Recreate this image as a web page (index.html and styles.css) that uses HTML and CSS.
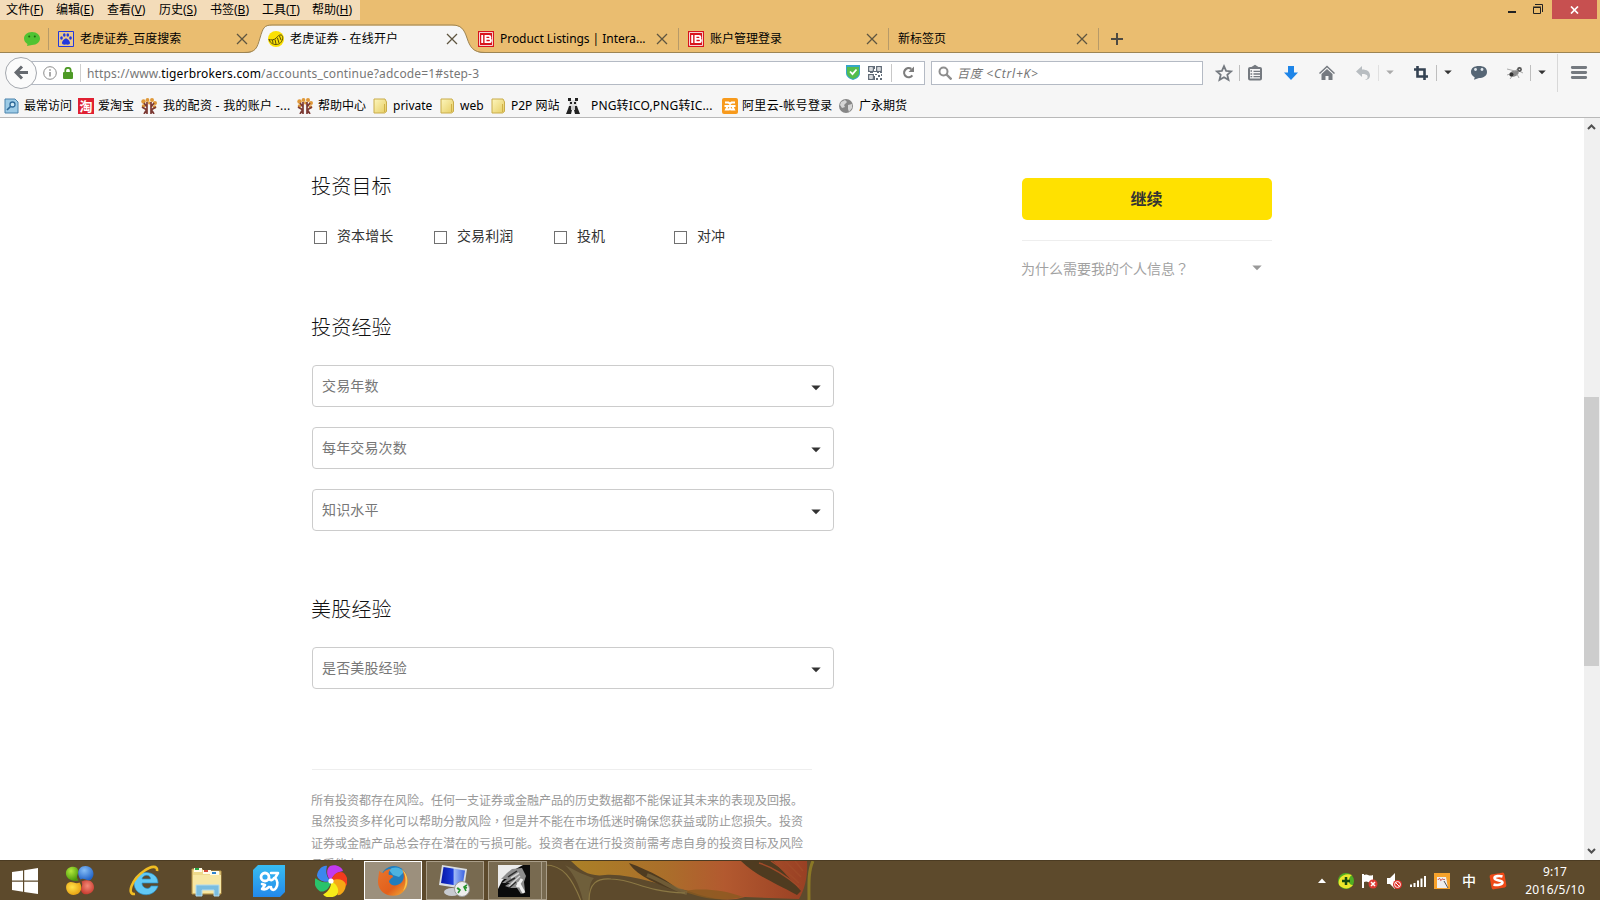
FILE: index.html
```html
<!DOCTYPE html>
<html lang="zh-CN">
<head>
<meta charset="utf-8">
<title>老虎证券 - 在线开户</title>
<link rel="stylesheet" href="styles.css">
</head>
<body>
<svg class="defs" width="0" height="0">
  <defs>
    <linearGradient id="folder" x1="0" y1="0" x2="1" y2="1"><stop offset="0" stop-color="#fdf6bd"/><stop offset="1" stop-color="#e6cd62"/></linearGradient>
    <linearGradient id="sky" x1="0" y1="0" x2="0" y2="1"><stop offset="0" stop-color="#38bdf2"/><stop offset="1" stop-color="#2389ea"/></linearGradient>
    <linearGradient id="fox" x1="0" y1="0" x2="1" y2="1"><stop offset="0" stop-color="#e8742c"/><stop offset=".6" stop-color="#e2601c"/><stop offset="1" stop-color="#f3b63a"/></linearGradient>
    <linearGradient id="screen" x1="0" y1="0" x2="1" y2="0"><stop offset="0" stop-color="#0616a8"/><stop offset=".5" stop-color="#1c3ddb"/><stop offset=".55" stop-color="#9fb9f5"/><stop offset="1" stop-color="#3a62e2"/></linearGradient>
    <linearGradient id="leaf" x1="0" y1="0" x2="1" y2="0"><stop offset="0" stop-color="#b98a26"/><stop offset=".4" stop-color="#b8752a"/><stop offset=".65" stop-color="#c25c30"/><stop offset="1" stop-color="#a33e22"/></linearGradient>
    <radialGradient id="greenball" cx=".4" cy=".3" r=".7"><stop offset="0" stop-color="#b4ea3c"/><stop offset="1" stop-color="#4c9a0c"/></radialGradient>
    <radialGradient id="blueball" cx=".4" cy=".3" r=".7"><stop offset="0" stop-color="#85bdf6"/><stop offset="1" stop-color="#2264c8"/></radialGradient>
    <radialGradient id="goldball" cx=".4" cy=".4" r=".7"><stop offset="0" stop-color="#ffe14a"/><stop offset="1" stop-color="#e69a0a"/></radialGradient>
    <radialGradient id="redball" cx=".5" cy=".4" r=".7"><stop offset="0" stop-color="#f58a78"/><stop offset="1" stop-color="#c22f24"/></radialGradient>
    <symbol id="x" viewBox="0 0 12 12"><path d="M1 1l10 10M11 1L1 11" stroke="#5e5540" stroke-width="1.3"/></symbol>
    <symbol id="ib" viewBox="0 0 16 16"><path d="M0 0h16v16H0z" fill="#d8141c"/><path d="M1.5 1.5h13v13h-13z" fill="none" stroke="#fff" stroke-opacity=".8"/><path d="M4.200 4v8M7.500 4.900h3.400a1.500 1.500 0 0 1 0 3H7.500zM7.500 7.900h3.800a1.600 1.600 0 0 1 0 3.200H7.500z" fill="none" stroke="#fff" stroke-width="1.900"/></symbol>
    <symbol id="dir" viewBox="0 0 16 16"><path d="M1 1h11l1.500 3v9.500l-2 1.500H1z" fill="url(#folder)" stroke="#c9ac4a"/><path d="M11.500 6v8" stroke="#d0b148"/></symbol>
    <symbol id="tree" viewBox="0 0 16 16"><g fill="#df9838"><circle cx="2.500" cy="3.500" r="2.200"/><circle cx="6.500" cy="2" r="1.900"/><circle cx="11" cy="2" r="2"/><circle cx="14" cy="5" r="2"/><circle cx="2.500" cy="8" r="1.800"/><circle cx="13.500" cy="9" r="1.800"/><circle cx="8.500" cy="5" r="1.500"/></g><path d="M6 16V9L3 5M6 9V4M10 16V9l3-4M10 9V4M1 9l5 3M15 9l-5 3M3 16l3-5M13 16l-3-5" stroke="#7c3a34" stroke-width="1.700" fill="none"/></symbol>
    <symbol id="caret" viewBox="0 0 10 6"><path d="M.3.500h9.400L5 5.200z"/></symbol>
  </defs>
</svg>

<header class="chrome">
  <div class="titlebar">
    <nav class="menus">
      <span>文件(<u>F</u>)</span><span>编辑(<u>E</u>)</span><span>查看(<u>V</u>)</span><span>历史(<u>S</u>)</span><span>书签(<u>B</u>)</span><span>工具(<u>T</u>)</span><span>帮助(<u>H</u>)</span>
    </nav>
    <div class="controls">
      <svg width="46" height="19"><path d="M2 12h8" stroke="#222" stroke-width="2"/><path d="M27.500 7.500h7v6h-7zM27 7h8" fill="none" stroke="#222"/><path d="M29 4.500h7.500V12" fill="none" stroke="#222"/></svg>
      <div class="close"><svg width="9" height="8"><path d="M1 .5l7 7M8 .5l-7 7" stroke="#fff" stroke-width="1.700"/></svg></div>
    </div>
  </div>

  <div class="tabs">
    <div class="pinned"><svg width="16" height="14" viewBox="0 0 16 14"><path d="M8 0c5 0 8 3 8 6.500S13 13 8 13l-5 1 .5-2C1.500 11 0 9 0 6.500 0 3 3 0 8 0z" fill="#50c332"/><circle cx="5.200" cy="4.500" r="1" fill="#1c6a10"/><circle cx="10.800" cy="4.500" r="1" fill="#1c6a10"/></svg></div>
    <div class="tab split">
      <svg class="fav" viewBox="0 0 16 16"><path d="M.5.5h15v15H.5z" fill="#ebc68b" stroke="#2338dd"/><g fill="#2338dd"><ellipse cx="3.500" cy="7" rx="1.300" ry="1.700"/><ellipse cx="6.300" cy="4" rx="1.300" ry="1.800"/><ellipse cx="9.800" cy="4" rx="1.300" ry="1.800"/><ellipse cx="12.500" cy="7" rx="1.300" ry="1.700"/><path d="M8 7.500c1.700 0 4 2.700 4 4.500s-2.200 1.800-4 1.500c-1.800.3-4 .3-4-1.500s2.300-4.500 4-4.500z"/></g></svg>
      <span class="name">老虎证券_百度搜索</span><svg class="x"><use href="#x"/></svg>
    </div>
    <div class="tab active">
      <svg class="shape" width="242" height="30" viewBox="0 0 242 30"><path d="M0 29C12 29 13 24 16 14S20 1.500 28 1.500H208C217 1.500 220 5 223 14S229 29 241 29V30H0z" fill="#f6f6f6"/><path d="M0 28.500C12 28.500 13 24 16 14S20 1 28 1H208C217 1 220 5 223 14S229 28.500 241 28.500" fill="none" stroke="#9c8453"/></svg>
      <svg class="fav" viewBox="0 0 16 16"><circle cx="8" cy="8" r="8" fill="#fbe104"/><path d="M.8 8.500c2.500.8 5.500.5 7.500-1.500 1.500-2 3-3.500 5-3 2.500 1 1.500 6-1.500 8.500-3 1.800-7 1.300-9.500-1.500zM4.500 9l.5 3.500M7 8.500l1 4.500M9.500 7l1.500 5M11.500 5l1.500 4" fill="none" stroke="#5b4f08"/></svg>
      <span class="name opened">老虎证券 - 在线开户</span><svg class="x"><use href="#x"/></svg>
    </div>
    <div class="tab"><svg class="fav"><use href="#ib"/></svg><span class="name product">Product Listings | Intera...</span><svg class="x"><use href="#x"/></svg></div>
    <div class="tab split"><svg class="fav"><use href="#ib"/></svg><span class="name">账户管理登录</span><svg class="x"><use href="#x"/></svg></div>
    <div class="tab split"><span class="name">新标签页</span><svg class="x"><use href="#x"/></svg></div>
    <div class="tab-new split"><svg width="12" height="12"><path d="M6 0v12M0 6h12" stroke="#4d4a42" stroke-width="2"/></svg></div>
  </div>

  <div class="toolbar">
    <div class="address">
      <div class="back"><svg width="15" height="15" viewBox="0 0 15 15"><path d="M8 1.500L2 7.500l6 6M2.500 7.500H14" fill="none" stroke="#666a70" stroke-width="3"/></svg></div>
      <svg class="info" width="14" height="14"><circle cx="7" cy="7" r="6.300" fill="none" stroke="#8c8c8c"/><path d="M7 6v4.500M7 3.200v1.600" stroke="#8c8c8c" stroke-width="1.500"/></svg>
      <svg class="lock" width="10" height="12"><path d="M2.300 6V3.500a2.700 2.700 0 0 1 5.400 0V6" fill="none" stroke="#4e9a26" stroke-width="1.700"/><rect y="5" width="10" height="7" rx="1" fill="#4e9a26"/></svg>
      <span class="url">https://www.<b>tigerbrokers.com</b>/accounts_continue?adcode=1#step-3</span>
      <svg width="14" height="15" viewBox="0 0 14 15"><path d="M0 0h14v8c0 4-4 6-7 7-3-1-7-3-7-7z" fill="#36a6c8"/><path d="M1 2h12v6c0 3-3 5-6 6-3-1-6-3-6-6z" fill="#55bd4c"/><path d="M4 6.500l2.500 2.700L10.500 4.500" fill="none" stroke="#fff" stroke-width="1.800"/></svg>
      <svg class="qr" width="14" height="14"><path d="M.7.700h4.600v4.600H.7zM8.700.7h4.600v4.600H8.700zM.7 8.700h4.600v4.600H.7z" fill="none" stroke="#606a76" stroke-width="1.300"/><path d="M2.500 2.500h1v1h-1zM10.500 2.500h1v1h-1zM2.500 10.500h1v1h-1zM6 0h1v3H6zM6 5h2v1H6zM2 6h3v1H2zM9 6h2v1H9zM12 6h2v1h-2zM7 8h2v1H7zM10 9h2v2h-2zM12 12h2v2h-2zM8 12h2v2H8zM6 10h1v4H6zM13 8h1v2h-1z" fill="#606a76"/></svg>
      <div class="reload"><svg width="13" height="13" viewBox="0 0 13 13"><path d="M10.300 9.300A4.500 4.500 0 1 1 9.300 3" fill="none" stroke="#7d7d7d" stroke-width="2.200"/><path d="M12 .5V6H6.500z" fill="#7d7d7d"/></svg></div>
    </div>
    <div class="search"><svg width="14" height="14"><circle cx="5.500" cy="5.500" r="4" fill="none" stroke="#8e8e8e" stroke-width="2"/><path d="M8.500 8.500l5 5" stroke="#8e8e8e" stroke-width="2.400"/></svg><i>百度 &lt;Ctrl+K&gt;</i></div>
    <div class="tools">
      <svg class="tool" viewBox="0 0 20 20"><path d="M10 3.200l2.100 4.700 5 .5-3.800 3.400 1.200 5L10 14.200l-4.500 2.600 1.200-5L2.900 8.400l5-.5z" fill="none" stroke="#757a80" stroke-width="1.800"/></svg>
      <i class="sep"></i>
      <svg class="tool" viewBox="0 0 20 20"><rect x="4" y="5" width="12" height="11.500" rx="1" fill="none" stroke="#757a80" stroke-width="2"/><path d="M6 5l4-2.500L14 5zM5.500 8h1.500M8.500 8.300h6.500M8.500 11h6.500M8.500 13.700h6.500M5.500 11h1.700M5.500 13.700h1.700" fill="#757a80" stroke="#757a80" stroke-width="1.300"/></svg>
      <svg class="tool" viewBox="0 0 20 20"><path d="M7 3h6v6.500h4L10 17 3 9.500h4z" fill="#1e85e8"/></svg>
      <svg class="tool" viewBox="0 0 20 20"><path d="M2.500 10.500L10 3.500l7.500 7" fill="none" stroke="#757a80" stroke-width="1.500"/><path d="M10 6l5.500 5v6h-4v-4h-3v4h-4v-6z" fill="#757a80"/></svg>
      <svg class="tool" viewBox="0 0 20 20"><path d="M9 3v3.500c5 0 8 2 8 6 0 3-2.500 4.500-5 4.500 2-1 3-2 2.500-4-.5-1.500-2.500-2-5.500-2V14L3 8.500z" fill="#b8bdc1"/></svg>
      <i class="sep pale"></i><svg class="caret light"><use href="#caret"/></svg>
      <svg class="tool" viewBox="0 0 20 20"><path d="M6.500 3v10.500H17M3 6.500h10.500V17" fill="none" stroke="#344252" stroke-width="2.600"/></svg>
      <i class="sep"></i><svg class="caret"><use href="#caret"/></svg>
      <svg class="tool" viewBox="0 0 20 20"><path d="M10 3c5 0 8 2 8 6s-4 6-8 6l-5 1.700.7-2.500C3.500 13 2 11.500 2 9c0-4 3-6 8-6z" fill="#566675"/><circle cx="6.500" cy="6.500" r="1.400" fill="#e4eaf0"/><circle cx="13" cy="6.500" r="1.400" fill="#e4eaf0"/></svg>
      <svg class="tool" viewBox="0 0 20 20"><ellipse cx="9" cy="10.500" rx="5" ry="3" fill="#888" transform="rotate(-22 9 10.500)"/><path d="M2 6l8 2 5-4M5 11l-3 1M8 12l-3 4M12 11l2 4M14 8l4 2" stroke="#aaa" fill="none"/><circle cx="6.500" cy="11.500" r="2" fill="#333"/><circle cx="14.500" cy="6.500" r="2.400" fill="#555"/><circle cx="14.500" cy="6.500" r=".8" fill="#ddd"/></svg>
      <i class="sep"></i><svg class="caret"><use href="#caret"/></svg>
      <i class="sep tall"></i>
      <svg class="tool burger" viewBox="0 0 20 20"><path d="M3.300 4.500h13.400M3.300 9.500h13.400M3.300 14.500h13.400" stroke="#757a80" stroke-width="2.900" stroke-linecap="round"/></svg>
    </div>
  </div>

  <div class="bookmarks">
    <span><svg viewBox="0 0 16 16"><path d="M1 1h10l3 3v11H1z" fill="#9dcbe6" stroke="#4b83ac"/><circle cx="8.500" cy="6.500" r="2.500" fill="#cfe9f6" stroke="#2f6a9a" stroke-width="1.300"/><path d="M6.500 8.500L3 12" stroke="#2f6a9a" stroke-width="1.700"/></svg>最常访问</span>
    <span><em class="tao">淘</em>爱淘宝</span>
    <span><svg><use href="#tree"/></svg><q class="fund">我的配资 - 我的账户 -...</q></span>
    <span><svg><use href="#tree"/></svg><q class="help">帮助中心</q></span>
    <span><svg><use href="#dir"/></svg>private</span>
    <span><svg><use href="#dir"/></svg>web</span>
    <span><svg><use href="#dir"/></svg>P2P 网站</span>
    <span class="panda"><svg viewBox="0 0 16 16"><path d="M4 2h8v6H4z" fill="#ddd"/><path d="M3 0h3v3H3zM10 0h3v3h-3zM5 4h2v2H5zM9 4h2v2H9zM4 8h8l1 3 2 5h-5l-1-4H7l-1 4H1l2-5z" fill="#222"/><path d="M6 8h4v4H6z" fill="#ccc"/></svg><q class="png">PNG转ICO,PNG转IC...</q></span>
    <span><svg viewBox="0 0 16 16"><rect width="16" height="16" rx="2" fill="#f79a1c"/><path d="M3 4.500h3.500l1.500 1.500L9.500 4.500H13M2.500 8h11M5.500 8.500L4 11.500h3l1-1.500 1 1.500h3l-1.500-3" fill="none" stroke="#fff" stroke-width="1.900"/></svg><q class="ali">阿里云-帐号登录</q></span>
    <span class="globe"><svg viewBox="0 0 16 16"><circle cx="8" cy="8" r="7" fill="#868686"/><path d="M3 4l4-2 2 2-3 3 1 2-3 1-2-3zM10 7l4-1v4l-3 4-1-3z" fill="#d5d5d5"/></svg>广永期货</span>
  </div>
</header>

<main class="viewport">
  <div class="page">
    <section class="form">
      <h2>投资目标</h2>
      <div class="checks"><label><i></i>资本增长</label><label><i></i>交易利润</label><label><i></i>投机</label><label><i></i>对冲</label></div>
      <h2>投资经验</h2>
      <div class="selects">
        <div class="select">交易年数<svg class="caret"><use href="#caret"/></svg></div>
        <div class="select">每年交易次数<svg class="caret"><use href="#caret"/></svg></div>
        <div class="select">知识水平<svg class="caret"><use href="#caret"/></svg></div>
      </div>
      <h2>美股经验</h2>
      <div class="select">是否美股经验<svg class="caret"><use href="#caret"/></svg></div>
      <p class="risk"><span>所有投资都存在风险。任何一支证券或金融产品的历史数据都不能保证其未来的表现及回报。<br>虽然投资多样化可以帮助分散风险<span class="centred" lang="zh-TW">，</span>但是并不能在市场低迷时确保您获益或防止您损失。投资<br>证券或金融产品总会存在潜在的亏损可能。投资者在进行投资前需考虑自身的投资目标及风险<br>承受能力</span></p>
    </section>
    <aside class="side">
      <button>继续</button>
      <div class="why"><span>为什么需要我的个人信息<span class="centred" lang="zh-TW">？</span></span><svg class="caret"><use href="#caret"/></svg></div>
    </aside>
  </div>
  <div class="scroll">
    <svg width="9" height="6"><path d="M1 5l3.500-3.500L8 5" fill="none" stroke="#505050" stroke-width="2"/></svg>
    <div class="thumb"></div>
    <svg width="9" height="6"><path d="M1 1l3.500 3.500L8 1" fill="none" stroke="#505050" stroke-width="2"/></svg>
  </div>
</main>

<footer class="taskbar">
  <svg class="wallpaper" width="300" height="40" viewBox="0 0 300 40">
    <path d="M26 0H262C263 14 260 28 254 38L200 36C180 42 160 36 140 29 120 26 85 12 60 14 45 16 36 10 26 0z" fill="url(#leaf)" opacity=".85"/>
    <path d="M84 2c6 10 22 20 54 30-14-12-32-22-54-30zM196 0c14 14 30 20 56 34l4-4C240 12 234 6 228 0z" fill="#4f3b20"/>
    <path d="M214 2c14 4 26 12 40 24M226 0c12 8 20 14 28 22M240 0l16 16M250 0l8 10" fill="none" stroke="#a04a28" stroke-width="1.500"/>
    <path d="M138 30c16-3 40-2 60 6-20 5-40 2-60-6z" fill="#8a5a20" opacity=".8"/>
    <path d="M102 14c16 6 26 14 40 18" fill="none" stroke="#7d6a40" stroke-width="4" opacity=".7"/>
    <path d="M20 4c8 8 14 18 18 36h7c-2-14 1-20 4-23-8-2-16-6-29-13z" fill="#746440" opacity=".8"/>
    <path d="M0 4C18 4 27 17 36 40M44 40C44 22 52 17 66 18c26 1 30 12 74 14" fill="none" stroke="#8b7844" stroke-width="1.200"/>
    <path d="M268 0c-5 10-4 25-4 40" fill="none" stroke="#8a7826" stroke-width="3"/>
  </svg>
  <div class="launch">
    <div class="start"><svg width="26" height="26" viewBox="0 0 26 26"><path d="M0 4l11-1.600V12.500H0zM12.200 2.200L26 0v12.500H12.200zM0 13.700h11v10L0 22zM12.200 13.700H26V26l-13.800-2z" fill="#fff"/></svg></div>
    <div class="app"><svg width="30" height="30" viewBox="0 0 30 30"><path d="M13.500 14.500C6 16 0 12 1 6S12-1 13 4s-3 6 .5 10.500z" fill="url(#greenball)"/><path d="M15.500 13.500c-4-5-3-13.500 5-13.500s10 9 6 13-7-2-11 .5z" fill="url(#blueball)"/><path d="M14.500 16.500c4 5 1 12.500-6 12.500S-1 20 3 17s7 2 11.500-.5z" fill="url(#goldball)"/><path d="M16.500 15.500c7-3 12.500 0 12.500 6s-9 9-12 5 2-6-.5-11z" fill="url(#redball)"/></svg></div>
    <div class="app ie"><svg width="32" height="32" viewBox="0 0 32 32"><path d="M29 18H13c0 6 8 7 9 3h7C25 34 5 32 5 18S29 4 29 18zM13 14h8.500c0-5-7.500-5-8.500 0z" fill="#62c9f5" stroke="#2a8fca" stroke-width=".7"/><path d="M6 29C-3 30 3 14 15 6c7-5 14-6 13 0" fill="none" stroke="#f1bd22" stroke-width="2.600"/></svg></div>
    <div class="app"><svg width="32" height="32" viewBox="0 0 32 32"><path d="M1 4h10l2 2h17v23H1z" fill="#eed98b" stroke="#b9964b"/><path d="M3 3h8v4H3zM12 5h8v4h-8zM19 6h9v4h-9z" fill="#fffbe9"/><path d="M4 3h4v2H4z" fill="#28a745"/><path d="M13 5h4v2h-4z" fill="#d24a37"/><path d="M21 7h4v2h-4z" fill="#2e84d0"/><path d="M2 10h28v18H2z" fill="#f7e7a4"/><path d="M5 31V20h23v11h-5v-6H11v6z" fill="#7abde0" stroke="#b4dbee"/></svg></div>
    <div class="app"><svg width="32" height="32" viewBox="0 0 32 32"><path d="M5 0h27v27l-5 5H0V5z" fill="url(#sky)"/><circle cx="12" cy="12" r="4" fill="none" stroke="#fff" stroke-width="2.800"/><path d="M16 14c2 2 4 1 5-1M18 8h7l-3 5c3 2 3 7 1 10s-5 2-5-1M9 19l3 1-3 4c3 1 5 0 7-2" fill="none" stroke="#fff" stroke-width="2.600" stroke-linecap="round" stroke-linejoin="round"/></svg></div>
    <div class="app"><svg width="32" height="32" viewBox="-16 -16 32 32"><path d="M0 0C-5-5-5-12-1-15 5-17 11-14 12-10 7-9 2-7 0 0z" fill="#c23af0"/><path d="M0 0C-5-5-5-12-1-15 5-17 11-14 12-10 7-9 2-7 0 0z" fill="#f23b1e" transform="rotate(60)"/><path d="M0 0C-5-5-5-12-1-15 5-17 11-14 12-10 7-9 2-7 0 0z" fill="#f5a816" transform="rotate(105)"/><path d="M0 0C-5-5-5-12-1-15 5-17 11-14 12-10 7-9 2-7 0 0z" fill="#f6ec19" transform="rotate(160)"/><path d="M0 0C-5-5-5-12-1-15 5-17 11-14 12-10 7-9 2-7 0 0z" fill="#29c36b" transform="rotate(230)"/><path d="M0 0C-5-5-5-12-1-15 5-17 11-14 12-10 7-9 2-7 0 0z" fill="#3b86ee" transform="rotate(295)"/><circle r="2.600" fill="#fff"/></svg></div>
  </div>
  <div class="windows">
    <div class="win current"><svg width="32" height="32" viewBox="0 0 32 32"><circle cx="17" cy="14" r="13" fill="#217dbd"/><path d="M12 5c4-4 12-3 15 2l-5 5-6-2z" fill="#4cb3e0"/><path d="M2 6c2 1 3 2 4 2 2-3 5-4 8-4-2 2-3 4-2 6 2 0 4 0 4 2-2 1-4 3-4 5 3 5 8 4 12 1 4-4 3-10 1-14 8 7 7 18 1 23C18 35 1 30 1 17 1 12 2 10 2 6z" fill="url(#fox)"/><path d="M25 4c8 7 6 18 1 22 3-7 4-14-1-22z" fill="#f6c54d"/></svg></div>
    <div class="win"><svg width="32" height="32" viewBox="0 0 32 32"><ellipse cx="13" cy="27" rx="8" ry="4" fill="#c8cbd0"/><path d="M3 0l25 4-3 20L0 20z" fill="#d9dde2"/><path d="M4.500 2l21.500 3.500-2.500 16L2 18z" fill="url(#screen)"/><circle cx="23" cy="24" r="7.500" fill="#eee" stroke="#999"/><path d="M18 23l3 2-2 3M28 20l-3 2 2 4M21 25l-2-2M25 22l3 1" fill="none" stroke="#25932c" stroke-width="1.600"/></svg></div>
    <div class="win photo"><svg width="32" height="32" viewBox="0 0 32 32"><path d="M0 0h32v32H0z" fill="#0b0b0b"/><path d="M0 0h25L14 6 4 16 0 24z" fill="#ececec"/><path d="M14 4l10-1 4 8-2 6 1 9-4 3-4-6-6 0-6-2 5-3-8 0 5-4-6 0 6-6z" fill="#8d8d8d"/><path d="M21 8l-8 5M22 11l-9 8M17 18l-6 3" stroke="#d5d5d5" stroke-width="1.500"/><path d="M24 14l-5 8M20 17l6 11" stroke="#eee" stroke-width="3"/><path d="M19 6l-9 6M17 13l-9 5M18 17l-7 6" stroke="#2c2c2c" stroke-width="1.500"/></svg></div>
    <div class="edge"></div>
  </div>
  <div class="tray">
    <svg viewBox="0 0 24 20"><path d="M8 12l4-4.500 4 4.500z" fill="#fff"/></svg>
    <svg viewBox="0 0 24 20"><circle cx="12" cy="10" r="8" fill="#4fae22"/><path d="M5 14C3 7 10 1 18 4c-4 2-5 10 1 10-4 5-10 4-14 0z" fill="#ece62c"/><path d="M12 6v8M8 10h8" stroke="#164a10" stroke-width="2.500"/></svg>
    <svg viewBox="0 0 24 20"><path d="M5 3v14" stroke="#fff" stroke-width="2"/><path d="M6 4c4-2 4 2 9 0v7c-5 2-5-2-9 0z" fill="#fff"/><circle cx="15" cy="13" r="4.500" fill="#dc3a34"/><path d="M13 11l4 4M17 11l-4 4" stroke="#fff" stroke-width="1.500"/></svg>
    <svg viewBox="0 0 24 20"><path d="M5 7h3l5-5v16l-5-5H5z" fill="#fff"/><circle cx="15.500" cy="13.500" r="4.500" fill="#df3029"/><circle cx="15.500" cy="13.500" r="2.900" fill="none" stroke="#fff"/><path d="M13.500 11.500l4 4" stroke="#fff"/></svg>
    <svg viewBox="0 0 24 20"><path d="M5 13.500v2.500M8.500 12v4M12 9.500v6.500M15.500 7.500V16M19 5v11" stroke="#fff" stroke-width="2"/></svg>
    <svg viewBox="0 0 24 20"><path d="M4 2h16v16H4z" fill="#f6a22c"/><path d="M7 6h9l2 11H7z" fill="#eee"/><path d="M8 9c1-2 2-2 2.500 0s1.500-2 2.500-1 1 1 2 0" fill="none" stroke="#c23b3b"/><path d="M14 10l4 7" stroke="#555"/></svg>
    <b class="ime">中</b>
    <svg class="sogou" viewBox="0 0 24 20"><rect x="4.500" y="2.500" width="15" height="15" rx="2" fill="#ef4a17" transform="rotate(-10 12 10)"/><path d="M16.500 5.500c-3-1-8-.5-8 1.500 0 3 8 2 8 4.500s-6 3-9 2" fill="none" stroke="#fff" stroke-width="2.600"/></svg>
    <div class="clock"><span>9:17</span><span class="date">2016/5/10</span></div>
  </div>
</footer>
</body>
</html>
```
FILE: styles.css
```css
* { box-sizing: border-box; }
body {
  margin: 0;
  width: 1600px;
  height: 900px;
  overflow: hidden;
  display: flex;
  flex-direction: column;
  background: #fff;
  color: #000;
  font: 12px/16px "Noto Sans", "Noto Sans CJK SC", sans-serif;
}
svg { display: block; flex: none; }
.defs { position: absolute; }
.chrome { height: 118px; flex: none; background: #f6f6f6; border-bottom: 1px solid #b9b9b9; }

.titlebar { height: 20px; display: flex; justify-content: space-between; background: #eabd70; }
.menus {
  display: grid;
  grid-template-columns: 50px 51px 52px 51px 52px 50px 48px;
  width: 360px;
  padding-left: 6px;
  background: #f3dcb9;
  line-height: 19px;
  white-space: nowrap;
}
.controls { display: flex; width: 94px; }
.close { width: 45px; height: 19px; background: #c75050; display: flex; align-items: center; justify-content: center; }

.tabs { height: 33px; display: flex; background: #eabd70; border-bottom: 1px solid #9c8453; }
.pinned { width: 48px; padding: 12px 0 0 24px; }
.tab { position: relative; width: 210px; display: flex; align-items: center; padding: 5px 10px 0; }
.split { background: linear-gradient(#b79a68, #b79a68) 0 8px / 1px 22px no-repeat; }
.fav { width: 16px; height: 16px; margin-right: 6px; position: relative; }
.name { flex: 1; position: relative; white-space: nowrap; }
.product { letter-spacing: -.05px; }
.opened { letter-spacing: .2px; }
.x { width: 12px; height: 12px; position: relative; }
.active { z-index: 1; }
.shape { position: absolute; left: -14px; top: 4px; }
.tab-new { padding: 13px 0 0 13px; }

.toolbar { height: 39px; display: flex; align-items: center; }
.address {
  width: 895px;
  height: 24px;
  margin-left: 30px;
  border: 1px solid #b4bac4;
  background: #fff;
  display: flex;
  align-items: center;
}
.back {
  width: 32px;
  height: 32px;
  flex: none;
  margin-left: -26px;
  border: 1px solid #a4a8ae;
  border-radius: 50%;
  background: #fbfbfb;
  display: flex;
  align-items: center;
  justify-content: center;
}
.info { margin-left: 6px; }
.lock { margin-left: 6px; }
.url { flex: 1; margin-left: 7px; padding: 2px 0 0 6px; border-left: 1px solid #d0d0d0; color: #777; white-space: nowrap; letter-spacing: .16px; }
.url b { font-weight: 400; color: #000; }
.qr { margin-left: 8px; }
.reload { width: 33px; height: 18px; margin-left: 9px; border-left: 1px solid #c8c8c8; display: flex; align-items: center; justify-content: center; }
.search { width: 272px; height: 24px; margin-left: 6px; border: 1px solid #b4bac4; background: #fff; display: flex; align-items: center; gap: 5px; padding-left: 6px; color: #777; }
.search i { padding-top: 2px; letter-spacing: .75px; }
.tools { display: flex; align-items: center; margin-left: -5px; }
.tool { width: 20px; height: 20px; margin-left: 16px; }
.sep { width: 1px; height: 16px; margin-left: 5px; background: #bebebe; }
.sep + .tool { margin-left: 5px; }
.pale { background: #e0e0e0; }
.caret { width: 10px; height: 6px; fill: #333; }
.tools .caret { width: 8px; height: 5px; margin: 0 1px 0 7px; }
.caret.light { fill: #aaa; }
.caret + .tool { margin-left: 16px; }
.sep.tall { height: 38px; margin-left: 10px; background: #d8d8d8; }
.sep + .burger { margin-left: 11px; }

.bookmarks {
  display: grid;
  grid-template-columns: 74px 63px 156px 76px 67px 51px 74px 157px 117px 90px;
  height: 25px;
  padding: 2px 0 0 4px;
  align-items: center;
  white-space: nowrap;
}
.bookmarks span { display: flex; align-items: center; gap: 4px; }
.bookmarks svg { width: 16px; height: 16px; }
.bookmarks .panda { gap: 9px; }
.bookmarks .globe { gap: 5px; margin-left: -1px; }
.bookmarks q { quotes: none; }
.bookmarks .fund { margin-left: 2px; letter-spacing: .3px; }
.help { margin-left: 1px; }
.png { margin-left: 1px; letter-spacing: .15px; }
.ali { letter-spacing: .35px; }
.tao { width: 16px; height: 16px; background: #e02032; color: #fff; font: 700 13px/15px "Noto Sans CJK SC", sans-serif; text-align: center; }

.viewport { height: 742px; display: flex; justify-content: space-between; overflow: hidden; }
.page { display: flex; padding: 54px 0 0 312px; color: #333; font-size: 14px; line-height: 20px; }
.form { width: 522px; }
.form h2 { margin: 0 0 0 -1px; font-size: 20px; line-height: 30px; font-weight: 300; color: #111; letter-spacing: .2px; }
.checks { display: flex; margin: 24px 0 67px; }
.checks label { display: flex; width: 120px; gap: 10px; height: 20px; letter-spacing: .1px; }
.checks i { width: 13px; height: 13px; margin: 5px 0 0 2px; border: 1px solid #707070; }
.selects { display: flex; flex-direction: column; gap: 20px; margin-bottom: 64px; }
.select {
  height: 42px;
  border: 1px solid #ccc;
  border-radius: 4px;
  padding: 0 12px 0 9px;
  display: flex;
  align-items: center;
  justify-content: space-between;
  color: #777;
  letter-spacing: .15px;
}
.form h2 + .selects, .form h2 + .select { margin-top: 22px; }
.select .caret { width: 10px; height: 6px; margin-top: 3px; }
.risk {
  width: 500px;
  margin: 80px 0 0;
  padding-top: 20px;
  border-top: 1px solid #eee;
  color: #999;
  font-size: 12px;
  line-height: 21.3px;
  white-space: nowrap;
}
.risk > span { display: block; margin-left: -1px; }
.centred { font-family: "Noto Sans CJK TC", sans-serif; line-height: 1; }
.side { width: 250px; margin: 6px 0 0 188px; }
.side button { display: block; width: 250px; height: 42px; border: 0; border-radius: 5px; background: #ffe100; color: #333; font: 700 16px/38px "Noto Sans CJK SC", sans-serif; padding: 0 1px 2px 0; }
.why { display: flex; align-items: center; justify-content: space-between; margin-top: 20px; padding: 18px 10px 0 0; border-top: 1px solid #eee; color: #a2a2a2; }
.why > span { margin-left: -1px; }
.why .caret { width: 10px; height: 6px; fill: #999; margin-top: -3px; }
.scroll { width: 16px; background: #f0f0f0; display: flex; flex-direction: column; align-items: center; padding: 6px 1px 6px 0; }
.thumb { width: 15px; height: 269px; margin: 267px 0 182px; background: #cdcdcd; }

.taskbar { position: relative; height: 40px; flex: none; display: flex; background: #5d4a2c; border-top: 1px solid #4b3b22; }
.wallpaper { position: absolute; left: 545px; top: 0; }
.launch { display: flex; width: 364px; }
.launch > div { display: flex; align-items: center; justify-content: center; }
.start { width: 49px; }
.app { width: 62px; }
.app.ie { margin-left: 3px; }
.windows { position: relative; display: flex; gap: 4px; }
.win { width: 58px; height: 39px; border: 1px solid #a99d88; background: #786a50; display: flex; align-items: center; justify-content: center; }
.win.current { border-color: #fff; background: #9c907d; }
.win.photo { width: 54px; padding-right: 2px; }
.edge { width: 5px; height: 39px; margin-left: -4px; border: 1px solid #a99d88; border-left: 0; background: #786a50; }
.tray { margin-left: auto; display: flex; align-items: center; color: #fff; padding-top: 1px; }
.tray svg { width: 24px; height: 20px; }
.ime { width: 30px; text-align: center; font-size: 14px; font-weight: 500; }
.tray .sogou { margin-left: 2px; }
.clock { width: 90px; display: flex; flex-direction: column; align-items: center; line-height: 18px; }
.date { letter-spacing: .3px; }
```
